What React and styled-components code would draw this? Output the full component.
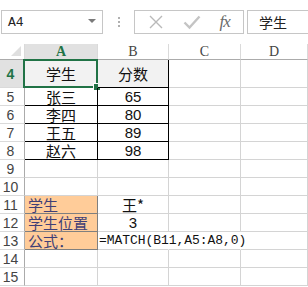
import React from "react";
import styled, { createGlobalStyle, css } from "styled-components";

const Global = createGlobalStyle`
  html, body { margin: 0; padding: 0; background: #fff; overflow: hidden; }
  body { font-family: "Liberation Sans", "Noto Sans CJK SC", sans-serif; }
`;

const CJK = `"Noto Sans CJK SC", sans-serif`;
const GREEN = "#217346";
const GRID = "#d4d4d4";

const Page = styled.div`
  width: 308px;
  height: 287px;
  overflow: hidden;
  display: flex;
  flex-direction: column;
`;

const Toolbar = styled.div`
  height: 44px;
  display: flex;
  align-items: flex-start;
  padding-top: 10px;
  padding-left: 1px;
  box-sizing: border-box;
  background: #fff;
`;

const NameBox = styled.div`
  width: 102px;
  height: 24px;
  box-sizing: border-box;
  border: 1px solid #c6c6c6;
  display: flex;
  align-items: center;
  justify-content: space-between;
  padding: 0 6px 0 6px;
  font-family: "Liberation Mono", monospace;
  font-size: 13px;
  line-height: 1;
  color: #222;
`;

const DropArrow = styled.span`
  width: 0;
  height: 0;
  border-left: 4px solid transparent;
  border-right: 4px solid transparent;
  border-top: 4px solid #7a7a7a;
  margin-top: -3px;
`;

const Dots = styled.div`
  width: 31px;
  height: 24px;
  display: flex;
  flex-direction: column;
  align-items: center;
  justify-content: center;
  gap: 2px;
  span {
    width: 2px;
    height: 2px;
    background: #b0b0b0;
  }
`;

const FxButtons = styled.div`
  width: 110px;
  height: 24px;
  box-sizing: border-box;
  border: 1px solid #c6c6c6;
  display: flex;
  align-items: center;
  justify-content: space-around;
  padding: 0 4px;
`;

const Fx = styled.span`
  font-family: "Liberation Serif", serif;
  font-style: italic;
  font-size: 17px;
  line-height: 1;
  color: #6a6a6a;
  letter-spacing: -1px;
  margin-top: -1px;
`;

const FormulaInput = styled.div`
  margin-left: 3px;
  flex: 1;
  height: 24px;
  box-sizing: border-box;
  border: 1px solid #c6c6c6;
  border-right: none;
  display: flex;
  align-items: center;
  padding-left: 11px;
  font-family: ${CJK};
  font-size: 14px;
  line-height: 1;
  color: #222;
`;

const Sheet = styled.div`
  display: grid;
  grid-template-columns: 25px 73px 71px 72px 1fr;
  grid-template-rows: 16px 28px repeat(11, 18px);
`;

const Corner = styled.div`
  position: relative;
  border-right: 1px solid #dadada;
  border-bottom: 1px solid #ababab;
  background: #fff;
  &::after {
    content: "";
    position: absolute;
    right: 3px;
    bottom: 3px;
    width: 0;
    height: 0;
    border-left: 10px solid transparent;
    border-bottom: 10px solid #dfdfdf;
  }
`;

const ColHead = styled.div`
  border-right: 1px solid #dadada;
  border-bottom: 1px solid #ababab;
  display: flex;
  align-items: center;
  justify-content: center;
  font-family: "Liberation Serif", serif;
  font-size: 14px;
  line-height: 1;
  color: #444;
  padding-top: 1px;
  ${(p) =>
    p.$active &&
    css`
      background: #e1e1e1;
      color: ${GREEN};
      font-weight: bold;
      border-bottom-color: ${GREEN};
    `}
`;

const RowHead = styled.div`
  border-right: 1px solid #ababab;
  border-bottom: 1px solid #dadada;
  display: flex;
  align-items: center;
  justify-content: center;
  padding-right: 3px;
  font-size: 14px;
  line-height: 1;
  color: #444;
  ${(p) =>
    p.$active &&
    css`
      background: #e1e1e1;
      color: ${GREEN};
      font-weight: bold;
      border-right-color: ${GREEN};
    `}
`;

const Cell = styled.div`
  position: relative;
  min-width: 0;
  border-right: 1px solid ${GRID};
  border-bottom: 1px solid ${GRID};
  display: flex;
  align-items: center;
  justify-content: ${(p) => (p.$align === "left" ? "flex-start" : "center")};
  padding: 0 3px;
  white-space: nowrap;
  font-size: 15px;
  line-height: 1;
  color: #111;
  font-family: ${(p) => (p.$cjk ? CJK : `"Liberation Sans", sans-serif`)};
  ${(p) => p.$noRight && css`border-right-color: transparent;`}
  ${(p) => p.$head && css`background: #f2f2f2;`}
  ${(p) =>
    p.$boxed &&
    css`
      border-right-color: #000;
      border-bottom-color: #000;
    `}
  ${(p) =>
    p.$input &&
    css`
      background: #ffcc99;
      color: #3f3f76;
      border-right-color: #7f7f7f;
      border-bottom-color: #7f7f7f;
    `}
  ${(p) =>
    p.$overflow &&
    css`
      overflow: visible;
      z-index: 1;
    `}
`;

const Formula = styled.span`
  font-family: "Liberation Mono", monospace;
  font-size: 13px;
  letter-spacing: -0.05px;
  margin-left: -2px;
`;

const Selection = styled.div`
  position: absolute;
  left: -2px;
  top: -1px;
  right: -1px;
  bottom: -1px;
  border: 2px solid ${GREEN};
  pointer-events: none;
  &::after {
    content: "";
    position: absolute;
    right: -5px;
    bottom: -5px;
    width: 6px;
    height: 6px;
    background: ${GREEN};
    border: 1px solid #fff;
  }
`;

const XIcon = () => (
  <svg width="16" height="16" viewBox="0 0 16 16">
    <path d="M2 2 L14 14 M14 2 L2 14" stroke="#b9b9b9" strokeWidth="1.4" fill="none" />
  </svg>
);

const CheckIcon = () => (
  <svg width="18" height="16" viewBox="0 0 18 16">
    <path d="M1.5 8.5 L6.5 13.5 L16.5 2.5" stroke="#c4c4c4" strokeWidth="2.4" fill="none" />
  </svg>
);

const rows = [
  { n: 5, a: "张三", b: "65" },
  { n: 6, a: "李四", b: "80" },
  { n: 7, a: "王五", b: "89" },
  { n: 8, a: "赵六", b: "98" },
];

export default function App() {
  return (
    <Page>
      <Global />
      <Toolbar>
        <NameBox>
          <span>A4</span>
          <DropArrow />
        </NameBox>
        <Dots>
          <span />
          <span />
          <span />
        </Dots>
        <FxButtons>
          <XIcon />
          <CheckIcon />
          <Fx>fx</Fx>
        </FxButtons>
        <FormulaInput>学生</FormulaInput>
      </Toolbar>
      <Sheet>
        <Corner />
        <ColHead $active>A</ColHead>
        <ColHead>B</ColHead>
        <ColHead>C</ColHead>
        <ColHead>D</ColHead>

        <RowHead $active>4</RowHead>
        <Cell $cjk $head $boxed>
          学生
          <Selection />
        </Cell>
        <Cell $cjk $head $boxed>分数</Cell>
        <Cell />
        <Cell />

        {rows.map((r) => (
          <React.Fragment key={r.n}>
            <RowHead>{r.n}</RowHead>
            <Cell $cjk $boxed>{r.a}</Cell>
            <Cell $boxed>{r.b}</Cell>
            <Cell />
            <Cell />
          </React.Fragment>
        ))}

        {[9, 10].map((n) => (
          <React.Fragment key={n}>
            <RowHead>{n}</RowHead>
            <Cell />
            <Cell />
            <Cell />
            <Cell />
          </React.Fragment>
        ))}

        <RowHead>11</RowHead>
        <Cell $cjk $input $align="left">学生</Cell>
        <Cell $cjk>王*</Cell>
        <Cell />
        <Cell />

        <RowHead>12</RowHead>
        <Cell $cjk $input $align="left">学生位置</Cell>
        <Cell>3</Cell>
        <Cell />
        <Cell />

        <RowHead>13</RowHead>
        <Cell $cjk $input $align="left">公式：</Cell>
        <Cell $align="left" $overflow $noRight>
          <Formula>=MATCH(B11,A5:A8,0)</Formula>
        </Cell>
        <Cell $noRight />
        <Cell />

        {[14, 15].map((n) => (
          <React.Fragment key={n}>
            <RowHead>{n}</RowHead>
            <Cell />
            <Cell />
            <Cell />
            <Cell />
          </React.Fragment>
        ))}
      </Sheet>
    </Page>
  );
}
